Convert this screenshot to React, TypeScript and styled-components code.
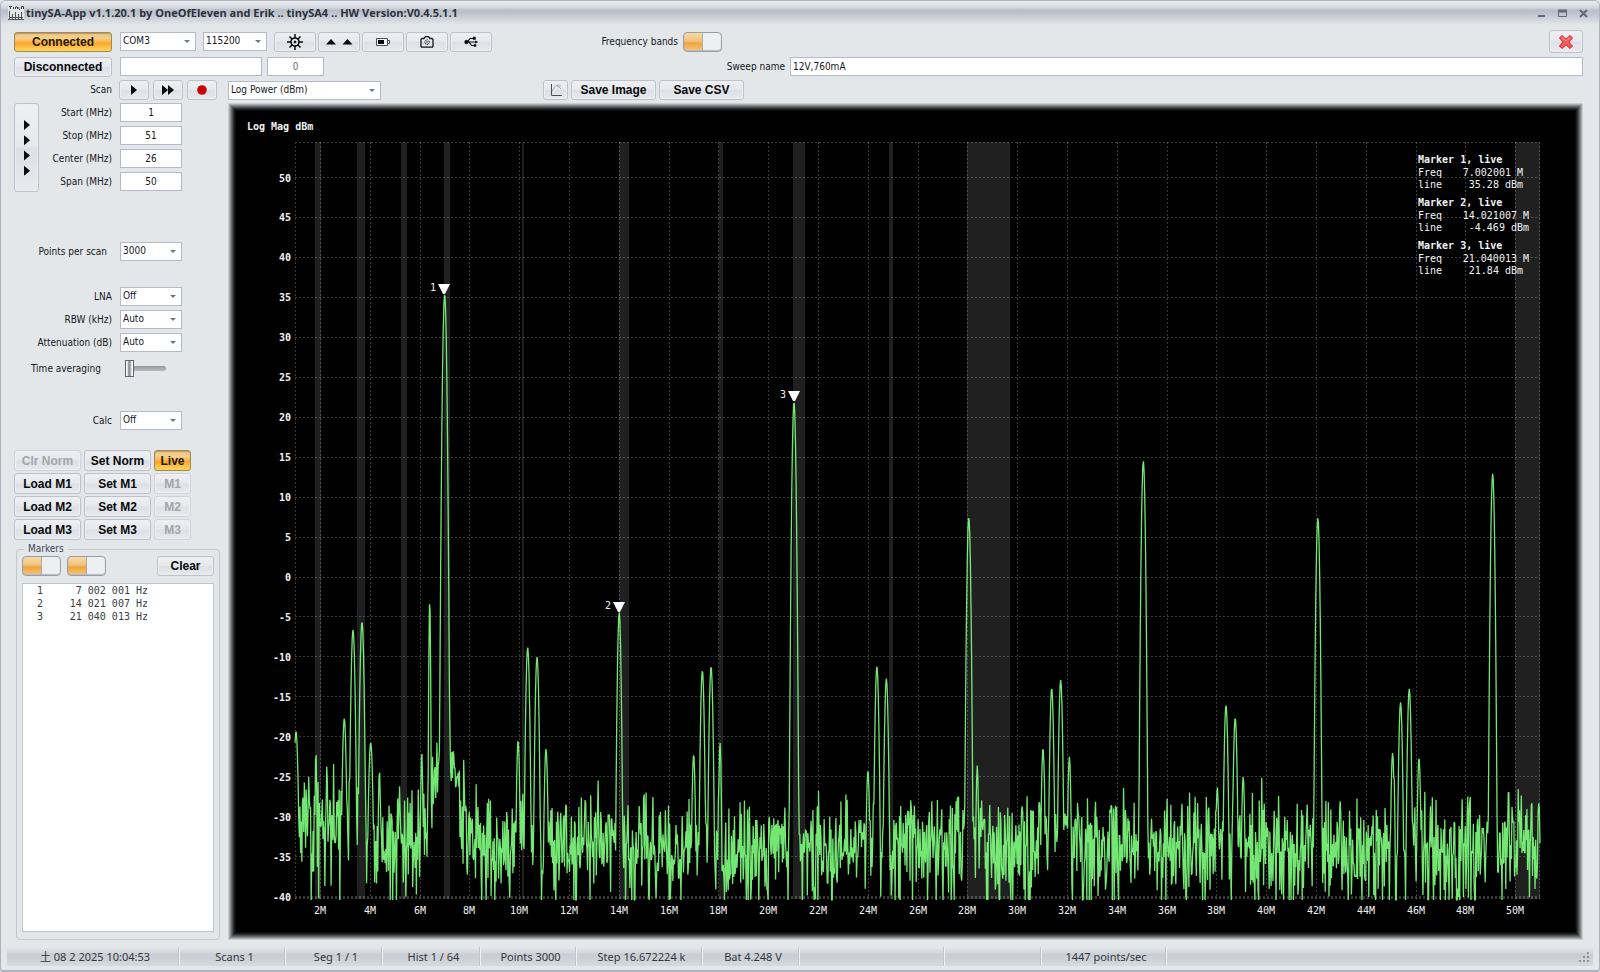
import React from "react";
import styled, { createGlobalStyle, css } from "styled-components";

const UI = `"DejaVu Sans Condensed", "Noto Sans", sans-serif`;
const STATUS = `"Noto Sans", "Noto Sans CJK JP", sans-serif`;
const MONO = `"DejaVu Sans Mono", monospace`;

const GlobalStyle = createGlobalStyle`
  *, *::before, *::after { box-sizing: border-box; }
  body { margin: 0; background: #e3e7ea; }
  button, input, select { font: inherit; color: inherit; margin: 0; }
`;

/* ---------- window frame ---------- */

const Window = styled.div`
  min-height: 100vh;
  display: flex;
  flex-direction: column;
  background: #e3e7ea;
  border: 1px solid #aeb3c3;
  border-bottom-width: 2px;
  border-radius: 6px 6px 3px 3px;
  font: 10px/14px ${UI};
  color: #16181c;
`;

const TitleBar = styled.header`
  height: 24px;
  display: flex;
  align-items: center;
  gap: 2px;
  padding: 0 6px 0 7px;
  border-radius: 5px 5px 0 0;
  background: linear-gradient(#e9ebee, #d3d6db 7px, #b8bec8 9px, #bfc5ce 13px, #e3e7ea 24px);
`;

const Title = styled.h1`
  flex: 1;
  margin: 0;
  font: bold 11px/16px "Open Sans", ${UI};
  color: #2b313b;
`;

const WindowButton = styled.button`
  width: 19px;
  height: 16px;
  padding: 0;
  border: 0;
  background: none;
  display: grid;
  place-items: center;
`;

/* ---------- controls ---------- */

type Tone = "plain" | "active";

const Button = styled.button<{ $tone?: Tone; $w?: number; $h?: number }>`
  width: ${(p) => (p.$w ? `${p.$w}px` : "100%")};
  height: ${(p) => p.$h ?? 21}px;
  flex: none;
  display: flex;
  align-items: center;
  justify-content: center;
  padding: 0;
  border: 1px solid #bcc1cc;
  border-radius: 3px;
  background: linear-gradient(#eef0f3, #e6e8ed 48%, #dcdfe6 52%, #e8eaee);
  box-shadow: inset 0 0 0 1px #eceef2;
  font: bold 12px/14px "Liberation Sans", sans-serif;
  color: #08090b;
  white-space: nowrap;
  &:disabled {
    color: #a3a6ab;
    border-color: #d0d4db;
  }
  ${(p) =>
    p.$tone === "active" &&
    css`
      border-color: #a48a52;
      background: linear-gradient(#e9c586, #f6cf8c 30%, #f9b64f 48%, #fca52e 55%, #ffcf55 90%);
      box-shadow: inset 0 1px 1px #b89a63;
      color: #241a08;
    `}
`;

const TextBox = styled.input<{ $w?: number; $align?: string }>`
  width: ${(p) => (p.$w ? `${p.$w}px` : "100%")};
  height: 19px;
  flex: none;
  padding: 0 2px;
  border: 1px solid #b5bacb;
  background: #fff;
  line-height: 14px;
  text-align: ${(p) => p.$align ?? "left"};
  &:read-only { color: #6d7178; }
`;

const SelectWrap = styled.span<{ $w: number }>`
  position: relative;
  display: block;
  flex: none;
  width: ${(p) => p.$w}px;
  height: 19px;
  &::after {
    content: "";
    position: absolute;
    right: 6px;
    top: 8px;
    border: 3px solid transparent;
    border-top-color: #6b7686;
    border-bottom: 0;
    pointer-events: none;
  }
`;

const SelectBox = styled.select`
  appearance: none;
  display: block;
  width: 100%;
  height: 100%;
  padding: 0 14px 1px 2px;
  border: 1px solid #b5bacb;
  border-radius: 0;
  background: #fff;
`;

const Switch = styled.input`
  appearance: none;
  display: block;
  flex: none;
  width: 39px;
  height: 20px;
  border: 1px solid #9a9ea8;
  border-radius: 4px;
  background:
    linear-gradient(90deg, transparent 18px, #a9abb2 18px, #a9abb2 19px, transparent 19px),
    linear-gradient(90deg, transparent 19px, #eeeff2 19px),
    linear-gradient(#f7d9a6, #f3c27c 45%, #eda43f 55%, #f7c67a);
  box-shadow: inset 0 -1px 1px #b9bbc2;
`;

const Range = styled.input`
  appearance: none;
  display: block;
  width: 41px;
  height: 17px;
  background: none;
  &::-webkit-slider-runnable-track {
    height: 5px;
    border-radius: 3px;
    background: linear-gradient(#94979f, #b9bcc3);
  }
  &::-webkit-slider-thumb {
    appearance: none;
    width: 9px;
    height: 17px;
    margin-top: -6px;
    border: 1px solid #5f6470;
    background: linear-gradient(90deg, #fff 1px, #c4c6cc 2px, #7d8087 3px, #c4c6cc 5px, #fff 6px);
  }
`;

function Select({ w, value, id, label }: { w: number; value: string; id?: string; label?: string }) {
  return (
    <SelectWrap $w={w}>
      <SelectBox id={id} aria-label={label} defaultValue={value}>
        <option>{value}</option>
      </SelectBox>
    </SelectWrap>
  );
}

/* ---------- toolbars ---------- */

const Toolbars = styled.div`
  display: flex;
  flex-direction: column;
  gap: 2px;
  padding: 5px 16px 0 13px;
`;

const ToolRow = styled.div<{ $h: number }>`
  display: flex;
  align-items: center;
  height: ${(p) => p.$h}px;
`;

const Group = styled.div<{ $gap: number; $w?: number; $ml?: number; $grow?: boolean }>`
  display: flex;
  align-items: center;
  gap: ${(p) => p.$gap}px;
  margin-left: ${(p) => p.$ml ?? 0}px;
  flex: ${(p) => (p.$grow ? "1" : "none")};
  ${(p) => p.$w && `width: ${p.$w}px;`}
`;

const Caption = styled.label<{ $w?: number }>`
  flex: none;
  ${(p) => p.$w && `width: ${p.$w}px;`}
  text-align: right;
  white-space: nowrap;
`;

const Push = styled.div`
  margin-left: auto;
`;

const Fill = styled.div`
  flex: 1;
  display: flex;
`;

/* ---------- side panel ---------- */

const Body = styled.main`
  flex: 1;
  display: flex;
  align-items: stretch;
  padding: 3px 16px 7px 13px;
`;

const Side = styled.aside`
  flex: none;
  width: 207px;
  margin-right: 7px;
  display: flex;
  flex-direction: column;
`;

const RangeBlock = styled.section`
  display: grid;
  grid-template-columns: 25px 1fr;
  height: 89px;
`;

const Fields = styled.div<{ $mt?: number }>`
  display: flex;
  flex-direction: column;
  gap: 4px;
  margin-top: ${(p) => p.$mt ?? 0}px;
`;

const Field = styled.div<{ $narrow?: boolean }>`
  display: grid;
  grid-template-columns: 1fr 62px;
  column-gap: ${(p) => (p.$narrow ? 13 : 8)}px;
  align-items: center;
  height: 19px;
  margin-right: 39px;
`;

const SliderField = styled(Field)`
  grid-template-columns: 1fr 57px;
  column-gap: 24px;
  margin-top: 3px;
`;

const MemoryGrid = styled.section`
  display: grid;
  grid-template-columns: 67px 67px 37px;
  gap: 2px 3px;
  margin-top: 20px;
`;

const Markers = styled.fieldset`
  flex: 1;
  display: flex;
  flex-direction: column;
  min-width: 0;
  margin: 2px 1px 0 2px;
  padding: 0 5px 7px;
  border: 1px solid #c3c7ce;
  border-radius: 4px;
  & > legend {
    padding: 0 4px;
    margin-left: 2px;
    color: #3c4656;
  }
`;

const MarkerTools = styled.div`
  display: flex;
  align-items: center;
  gap: 6px;
  height: 20px;
  & > :last-child { margin-left: auto; }
`;

const MarkerBox = styled.div`
  flex: 1;
  margin-top: 7px;
  border: 1px solid #c0c4d2;
  background: #fff;
`;

const MarkerTable = styled.table`
  border-collapse: collapse;
  font: 10px/13px ${MONO};
  color: #3a3d42;
  td { padding: 0; white-space: nowrap; text-align: right; }
  td:first-child { width: 20px; }
  td:last-child { width: 105px; }
`;

/* ---------- chart ---------- */

const ChartPanel = styled.section`
  flex: 1;
  min-width: 0;
  background: #000;
  box-shadow:
    inset 0 0 0 1px #c9cccf, inset 0 0 0 2px #a9acae, inset 0 0 0 3px #878a8c,
    inset 0 0 0 4px #686a6c, inset 0 0 0 5px #4b4d4e, inset 0 0 0 6px #303132,
    inset 0 0 0 7px #1a1b1b, inset 0 0 0 8px #0b0b0b;
`;

const ChartSvg = styled.svg`
  display: block;
  width: 100%;
  height: auto;
  font-family: ${MONO};
  font-size: 10px;
  fill: #f2f2f2;
`;

const PLOT = { left: 67, right: 1312, top: 39, bottom: 796, zero: 474 };
const PER_MHZ = 24.9;
const PER_DB = 7.99;
const fx = (mhz: number) => PLOT.left + (mhz - 1) * PER_MHZ;
const fy = (db: number) => PLOT.zero - db * PER_DB;

const BANDS = [
  [1.8, 2], [3.5, 3.8], [5.26, 5.46], [7, 7.2], [10.1, 10.15], [14, 14.35],
  [18.03, 18.17], [21, 21.45], [24.87, 25], [28, 29.7], [50, 51],
];

/* [centre MHz, level dBm, steepness dB/MHz²] */
const PEAKS: number[][] = [
  [1.04, -19.3, 900], [1.84, -21.8, 5000], [2.28, -23.6, 5000], [2.98, -17.7, 1100],
  [3.33, -6.6, 1100], [3.69, -5.6, 1100], [4.04, -20.7, 900], [4.39, -24.2, 3000],
  [5.2, -26.2, 5000], [6.09, -21.8, 3500], [6.41, -2.8, 6000], [6.83, -18, 4000],
  [7.01, 35.4, 1350], [7.2, -18, 2500], [7.36, -21.5, 3000], [9.96, -20.4, 1600],
  [10.345, -8.8, 1200], [10.72, -10, 1200], [11.08, -21.5, 1300], [14.021, -4.4, 1400],
  [17.01, -22.2, 1500], [17.36, -11.7, 1200], [17.71, -11.2, 1200], [18.07, -20.7, 2500],
  [21.04, 21.9, 1400], [24.01, -24.2, 1500], [24.37, -11.2, 1200], [24.75, -12.7, 1200],
  [28.06, 7.5, 1400], [28.4, -23.6, 2500], [31.04, -21.4, 1500], [31.39, -13.9, 1200],
  [31.75, -12.9, 1200], [32.1, -22.5, 1600], [35.07, 14.5, 1400], [38.04, -26.5, 1600],
  [38.39, -16, 1200], [38.76, -17.6, 1200], [39.08, -25, 1600], [42.08, 7.4, 1400],
  [45.08, -22, 1500], [45.4, -15.7, 1200], [45.75, -14, 1200], [46.14, -22.6, 1500],
  [49.1, 12.9, 1400],
];

function floorLevel(f: number) {
  if (f < 1.5) return -25 - (f - 1) * 7;
  if (f < 4.2) return -29.5;
  if (f > 6.5 && f < 7.9) return -20.5 - Math.abs(f - 7) * 10;
  if (f < 9) return -31.8;
  return -33;
}

function buildTrace() {
  let seed = 20250208;
  const rnd = () => {
    seed = (Math.imul(seed, 1664525) + 1013904223) >>> 0;
    return (seed + 1) / 4294967297;
  };
  const points: string[] = [];
  const count = 2000;
  for (let i = 0; i <= count; i++) {
    const f = 1 + (50 * i) / count;
    const swing = f > 6.5 && f < 7.6 ? 0.6 : 1.15;
    const power = (-Math.log(rnd()) - Math.log(rnd())) / 2;
    let v = floorLevel(f) + swing * 10 * Math.log10(power);
    for (const [c, p, k] of PEAKS) {
      const dome = p - k * (f - c) * (f - c);
      if (dome > v) v = dome;
    }
    points.push(`${fx(f).toFixed(2)},${Math.min(fy(v), PLOT.bottom + 1).toFixed(1)}`);
  }
  return points.join(" ");
}

const TRACE = buildTrace();

const MARKERS = [
  { n: 1, mhz: 7.002001, db: 35.28, freq: "7.002001 M", line: "35.28 dBm", hz: "7 002 001 Hz" },
  { n: 2, mhz: 14.021007, db: -4.469, freq: "14.021007 M", line: "-4.469 dBm", hz: "14 021 007 Hz" },
  { n: 3, mhz: 21.040013, db: 21.84, freq: "21.040013 M", line: "21.84 dBm", hz: "21 040 013 Hz" },
];

const X_TICKS = Array.from({ length: 25 }, (_, i) => 2 + i * 2);
const Y_TICKS = Array.from({ length: 19 }, (_, i) => 50 - i * 5);

function Chart() {
  return (
    <ChartSvg viewBox="0 0 1355 837" role="img" aria-label="Log Mag dBm">
      {BANDS.map(([a, b]) => (
        <rect key={a} x={Math.round(fx(a))} y={PLOT.top} width={Math.round((b - a) * PER_MHZ) + (b < 51 ? 1 : 0)}
          height={PLOT.bottom - PLOT.top} fill="#202020" />
      ))}
      <g stroke="#fff" strokeOpacity="0.23" strokeDasharray="2 2" fill="none" shapeRendering="crispEdges">
        {X_TICKS.map((m) => (
          <path key={m} d={`M${Math.round(fx(m)) + 0.5} ${PLOT.top}V${PLOT.bottom}`} />
        ))}
        {Y_TICKS.slice(0, -1).map((d) => (
          <path key={d} d={`M${PLOT.left} ${Math.floor(fy(d)) + 0.5}H${PLOT.right}`} />
        ))}
        <path d={`M${PLOT.left} ${PLOT.top + 0.5}H${PLOT.right}M${PLOT.left + 0.5} ${PLOT.top}V${PLOT.bottom}M${PLOT.right - 0.5} ${PLOT.top}V${PLOT.bottom}`} />
        <path d={`M${PLOT.left} ${PLOT.bottom - 1.5}H${PLOT.right}`} strokeWidth="3" />
      </g>
      <polyline points={TRACE} fill="none" stroke="#80ff80" strokeWidth="1.3" strokeOpacity="0.9" strokeLinejoin="bevel" />
      <text x="19" y="27" fontWeight="bold">Log Mag dBm</text>
      <g textAnchor="end">
        {Y_TICKS.map((d) => (
          <text key={d} x="63" y={Math.round(fy(d)) + 4} fontWeight="bold">{d}</text>
        ))}
      </g>
      <g textAnchor="middle">
        {X_TICKS.map((m) => (
          <text key={m} x={Math.round(fx(m))} y="811">{m}M</text>
        ))}
      </g>
      {MARKERS.map((m) => {
        const x = Math.round(fx(m.mhz));
        const y = Math.round(fy(m.db)) - 1;
        const top = 56 + (m.n - 1) * 43;
        return (
          <g key={m.n}>
            <path d={`M${x - 6} ${y - 10}H${x + 6}L${x + 1} ${y}H${x - 1}Z`} fill="#fff" />
            <text x={x - 14} y={y - 3}>{m.n}</text>
            <text x="1190" y={top + 4} fontWeight="bold">Marker {m.n}, live</text>
            <text x="1190" y={top + 17}>Freq</text>
            <text x={m.n === 1 ? 1295 : 1301} y={top + 17} textAnchor="end">{m.freq}</text>
            <text x="1190" y={top + 29}>line</text>
            <text x={m.n === 2 ? 1301 : 1295} y={top + 29} textAnchor="end">{m.line}</text>
          </g>
        );
      })}
    </ChartSvg>
  );
}

/* ---------- icons ---------- */

const AppIcon = () => (
  <svg width="16" height="16" viewBox="0 0 16 16" aria-hidden="true">
    <rect y="1" width="16" height="14" fill="#e4e6ea" />
    <path d="M1 1.5h3M2.5 1v3M5.5 2v2M7.500 4V2h2v2M11 2v2l1 1M13.500 4V1.500h2V4" stroke="#3d4249" fill="none" />
    <path d="M1.500 15V6M4.500 14V9M7.500 14V7M10.500 14V9M13.500 14V7M0 14.500h16M2 12.500h13" stroke="#4d535c" fill="none" />
  </svg>
);

const GearIcon = () => (
  <svg width="16" height="16" viewBox="0 0 16 16" fill="none" stroke="#0a0b0d" aria-hidden="true">
    <circle cx="8" cy="8" r="4" strokeWidth="1.600" />
    <circle cx="8" cy="8" r="1" fill="#0a0b0d" />
    <path d="M8 0v4M8 12v4M0 8h4M12 8h4M2.500 2.500l3 3M10.500 10.500l3 3M13.500 2.500l-3 3M5.500 10.500l-3 3" strokeWidth="1.500" />
  </svg>
);

const UpIcon = () => (
  <svg width="28" height="8" viewBox="0 0 28 8" fill="#08090b" aria-hidden="true">
    <path d="M6 1l5 5.500H1zM22.500 1l5 5.500h-10z" />
  </svg>
);

const BatteryIcon = () => (
  <svg width="14" height="10" viewBox="0 0 14 10" aria-hidden="true">
    <path d="M.5 1.500h11v7H.5zM12 3.500h1.500v3H12" fill="#f6f7f8" stroke="#4b4f56" />
    <path d="M2 3h6v4H2z" fill="#0a0b0d" />
  </svg>
);

const CameraIcon = () => (
  <svg width="14" height="12" viewBox="0 0 14 12" fill="none" stroke="#15171a" aria-hidden="true">
    <path d="M1 10.500V3.500l1-1h2L5.500.7h3L10 2.500h2l1 1v7l-.5.7H1.500z" strokeWidth="1.300" />
    <path d="M7 3.300L9.800 6.200 7 9 4.200 6.200z" strokeDasharray="1.500 .8" />
    <circle cx="7" cy="6.200" r=".8" stroke="#777" />
  </svg>
);

const UsbIcon = () => (
  <svg width="14" height="12" viewBox="0 0 14 12" fill="none" stroke="#0e1013" aria-hidden="true">
    <path d="M1 6h11M3.500 6L6 2.500h3M5 6l2.500 3.500H10" strokeWidth="1.200" />
    <circle cx="2.500" cy="6" r="1.700" fill="#0e1013" />
    <path d="M9 1h2.500v2.500H9zM10 8.500h2v2h-2zM11.500 4.800L13.700 6l-2.200 1.200z" fill="#0e1013" strokeWidth=".5" />
  </svg>
);

const PlayIcon = ({ n = 1 }: { n?: number }) => (
  <svg width={n * 6} height="10" viewBox={`0 0 ${n * 6} 10`} fill="#08090b" aria-hidden="true">
    {Array.from({ length: n }, (_, i) => (
      <path key={i} d={`M${i * 6} 0v10l6-5z`} />
    ))}
  </svg>
);

const RecordIcon = () => (
  <svg width="10" height="10" viewBox="0 0 10 10" aria-hidden="true">
    <circle cx="5" cy="5" r="4.800" fill="#c40404" />
  </svg>
);

const PlotIcon = () => (
  <svg width="14" height="14" viewBox="0 0 14 14" fill="none" aria-hidden="true">
    <path d="M2.500 1v11.500H13" stroke="#4a4d53" />
    <path d="M3 8l2-3 2-2.500L9 3l3 3M9 4V1M11 4V1.500" stroke="#a3a6ac" />
  </svg>
);

const CrossIcon = () => (
  <svg width="16" height="16" viewBox="0 0 16 16" aria-hidden="true">
    <path d="M4 1.500L8 5.200 12 1.500 14.500 4 10.800 8 14.500 12 12 14.500 8 10.800 4 14.500 1.500 12 5.200 8 1.500 4z" fill="#fb5a5e" stroke="#dc1a24" strokeLinejoin="round" />
    <path d="M4 3.500l4 3.500L12 3.500" stroke="#ff9a9a" fill="none" />
  </svg>
);

const SideArrows = () => (
  <svg width="6" height="56" viewBox="0 0 6 56" fill="#08090b" aria-hidden="true">
    <path d="M0 0l6 5-6 5zM0 15.300l6 5-6 5zM0 30.500l6 5-6 5zM0 45.800l6 5-6 5z" />
  </svg>
);

/* ---------- status bar ---------- */

const StatusBar = styled.footer`
  display: flex;
  height: 19px;
  margin: 0 6px 4px;
  background: linear-gradient(#e6e8ec, #d3d6dc 30%, #c9ccd4 40%, #d6d9dd);
  font: 11px/19px ${STATUS};
  color: #33373d;
`;

const StatusCell = styled.span<{ $w: number }>`
  flex: 0 1 ${(p) => p.$w}px;
  padding-left: 4px;
  border-right: 1px solid #f0f1f4;
  box-shadow: inset -1px 0 0 #c0c4cc;
  text-align: center;
  white-space: nowrap;
`;

const Grip = styled.svg`
  margin: 5px 2px 0 auto;
`;

const STATUS_CELLS: [string, number][] = [
  ["土 08 2 2025 10:04:53", 173], ["Scans 1", 106], ["Seg 1 / 1", 97], ["Hist 1 / 64", 98],
  ["Points 3000", 96], ["Step 16.672224 k", 126], ["Bat 4.248 V", 97], ["", 145], ["", 97],
  ["1447 points/sec", 125],
];

const RANGE_FIELDS = [["Start (MHz)", "1"], ["Stop (MHz)", "51"], ["Center (MHz)", "26"], ["Span (MHz)", "50"]];
const MODE_FIELDS = [["LNA", "Off"], ["RBW (kHz)", "Auto"], ["Attenuation (dB)", "Auto"]];

export default function App() {
  return (
    <>
      <GlobalStyle />
      <Window>
        <TitleBar>
          <AppIcon />
          <Title>tinySA-App v1.1.20.1 by OneOfEleven and Erik .. tinySA4 .. HW Version:V0.4.5.1.1</Title>
          <WindowButton aria-label="Minimize">
            <svg width="9" height="9"><path d="M1 7h7" stroke="#5d6a7c" strokeWidth="2" /></svg>
          </WindowButton>
          <WindowButton aria-label="Maximize">
            <svg width="9" height="9"><path d="M.5 2v5.500h8V2" fill="none" stroke="#5d6a7c" /><path d="M0 2h9" stroke="#5d6a7c" strokeWidth="3" /></svg>
          </WindowButton>
          <WindowButton aria-label="Close">
            <svg width="9" height="9"><path d="M1 1l7 7M8 1l-7 7" stroke="#5d6a7c" strokeWidth="2" /></svg>
          </WindowButton>
        </TitleBar>

        <Toolbars>
          <ToolRow $h={23}>
            <Button $tone="active" $w={98} $h={20}>Connected</Button>
            <Group $gap={7} $ml={8}>
              <Select w={76} value="COM3" label="Port" />
              <Select w={64} value="115200" label="Baud rate" />
            </Group>
            <Group $gap={2} $ml={7} $w={222}>
              <Button $w={42} $h={20} aria-label="Settings"><GearIcon /></Button>
              <Button $w={42} $h={20} aria-label="Move up"><UpIcon /></Button>
              <Button $w={42} $h={20} aria-label="Battery"><BatteryIcon /></Button>
              <Button $w={42} $h={20} aria-label="Capture"><CameraIcon /></Button>
              <Button $w={42} $h={20} aria-label="USB"><UsbIcon /></Button>
            </Group>
            <Group $gap={5} $ml={100}>
              <Caption htmlFor="bands" $w={82}>Frequency bands</Caption>
              <Switch id="bands" type="checkbox" defaultChecked />
            </Group>
            <Push><Button $w={34} $h={23} aria-label="Exit"><CrossIcon /></Button></Push>
          </ToolRow>
          <ToolRow $h={23}>
            <Button $w={98} $h={20}>Disconnected</Button>
            <Group $gap={5} $ml={8}>
              <TextBox $w={142} aria-label="Command" />
              <TextBox $w={57} $align="center" aria-label="Count" defaultValue="0" readOnly />
            </Group>
            <Group $gap={5} $ml={401} $grow>
              <Caption htmlFor="sweep" $w={60}>Sweep name</Caption>
              <Fill><TextBox id="sweep" defaultValue="12V,760mA" /></Fill>
            </Group>
          </ToolRow>
          <ToolRow $h={20}>
            <Caption as="span" $w={98}>Scan</Caption>
            <Group $gap={4} $ml={7}>
              <Button $w={30} $h={20} aria-label="Single scan"><PlayIcon /></Button>
              <Button $w={30} $h={20} aria-label="Continuous scan"><PlayIcon n={2} /></Button>
              <Button $w={30} $h={20} aria-label="Record"><RecordIcon /></Button>
            </Group>
            <Group $gap={0} $ml={11} $w={315}>
              <Select w={153} value="Log Power (dBm)" label="Display mode" />
            </Group>
            <Group $gap={3}>
              <Button $w={25} $h={20} aria-label="Plot"><PlotIcon /></Button>
              <Button $w={85} $h={20}>Save Image</Button>
              <Button $w={85} $h={20}>Save CSV</Button>
            </Group>
          </ToolRow>
        </Toolbars>

        <Body>
          <Side>
            <RangeBlock>
              <Button $h={89} aria-label="Apply range"><SideArrows /></Button>
              <Fields>
                {RANGE_FIELDS.map(([label, value]) => (
                  <Field key={label}>
                    <Caption htmlFor={label}>{label}</Caption>
                    <TextBox id={label} $align="center" defaultValue={value} />
                  </Field>
                ))}
              </Fields>
            </RangeBlock>
            <Fields $mt={50}>
              <Field $narrow>
                <Caption htmlFor="points">Points per scan</Caption>
                <Select w={62} id="points" value="3000" />
              </Field>
            </Fields>
            <Fields $mt={26}>
              {MODE_FIELDS.map(([label, value]) => (
                <Field key={label}>
                  <Caption htmlFor={label}>{label}</Caption>
                  <Select w={62} id={label} value={value} />
                </Field>
              ))}
              <SliderField>
                <Caption htmlFor="avg">Time averaging</Caption>
                <Range id="avg" type="range" min={0} max={10} defaultValue={0} />
              </SliderField>
            </Fields>
            <Fields $mt={33}>
              <Field>
                <Caption htmlFor="calc">Calc</Caption>
                <Select w={62} id="calc" value="Off" />
              </Field>
            </Fields>
            <MemoryGrid>
              <Button disabled>Clr Norm</Button>
              <Button>Set Norm</Button>
              <Button $tone="active">Live</Button>
              {[1, 2, 3].map((n) => (
                <React.Fragment key={n}>
                  <Button>Load M{n}</Button>
                  <Button>Set M{n}</Button>
                  <Button disabled>M{n}</Button>
                </React.Fragment>
              ))}
            </MemoryGrid>
            <Markers>
              <legend>Markers</legend>
              <MarkerTools>
                <Switch type="checkbox" defaultChecked aria-label="Show markers" />
                <Switch type="checkbox" defaultChecked aria-label="Track markers" />
                <Button $w={57} $h={20}>Clear</Button>
              </MarkerTools>
              <MarkerBox>
                <MarkerTable>
                  <tbody>
                    {MARKERS.map((m) => (
                      <tr key={m.n}>
                        <td>{m.n}</td>
                        <td>{m.hz}</td>
                      </tr>
                    ))}
                  </tbody>
                </MarkerTable>
              </MarkerBox>
            </Markers>
          </Side>
          <ChartPanel>
            <Chart />
          </ChartPanel>
        </Body>

        <StatusBar>
          {STATUS_CELLS.map(([text, w], i) => (
            <StatusCell key={i} $w={w}>{text}</StatusCell>
          ))}
          <Grip width="12" height="12" fill="#8d929b" aria-hidden="true">
            <path d="M8 0h2v2H8zM4 4h2v2H4zM8 4h2v2H8zM0 8h2v2H0zM4 8h2v2H4zM8 8h2v2H8z" />
          </Grip>
        </StatusBar>
      </Window>
    </>
  );
}
